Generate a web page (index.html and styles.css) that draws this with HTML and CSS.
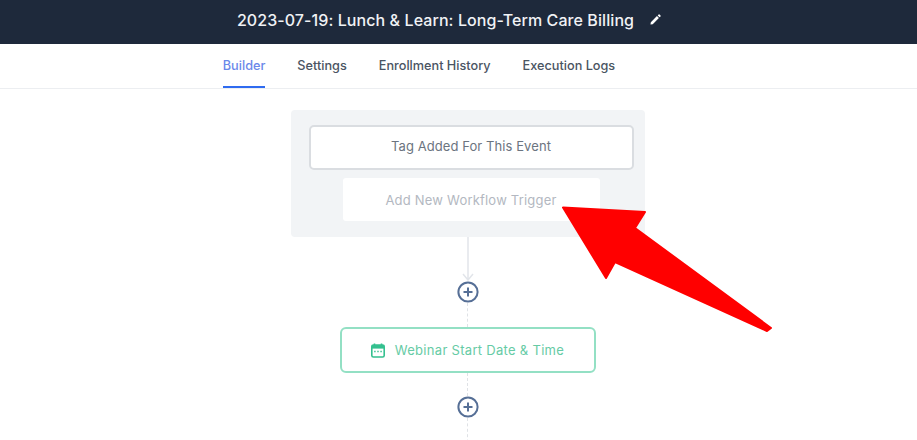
FILE: index.html
```html
<!DOCTYPE html>
<html lang="en">
<head>
<meta charset="utf-8">
<title>Workflow Builder</title>
<link rel="stylesheet" href="styles.css">
</head>
<body>
<header class="topbar">
  <h1 class="title">2023-07-19: Lunch &amp; Learn: Long-Term Care Billing</h1>
  <svg class="edit" viewBox="0 0 12 12" width="11" height="11"><path d="M0.5 11.5 L0.9 9 L7.6 2.3 L9.7 4.4 L3 11.1 Z M8.4 1.5 L9.4 0.5 Q9.9 0.1 10.4 0.5 L11.5 1.6 Q11.9 2.1 11.5 2.6 L10.5 3.6 Z" fill="#fff"/></svg>
</header>
<nav class="tabs">
  <a class="tab active">Builder</a>
  <a class="tab">Settings</a>
  <a class="tab">Enrollment History</a>
  <a class="tab">Execution Logs</a>
</nav>
<main class="canvas">
  <section class="triggers">
    <div class="trigger">Tag Added For This Event</div>
    <div class="add-trigger">Add New Workflow Trigger</div>
  </section>
  <svg class="arrow-link" viewBox="0 0 12 44" width="12" height="44"><path d="M6 0 V43 M1 37 L6 43 L11 37" fill="none" stroke="#e2e5ea" stroke-width="1.5"/></svg>
  <svg class="plus" viewBox="0 0 22 22" width="22" height="22"><circle cx="11" cy="11" r="9.6" fill="#fff" stroke="#566f96" stroke-width="2"/><path d="M11 6.5 V15.5 M6.5 11 H15.5" stroke="#566f96" stroke-width="2"/></svg>
  <div class="dash short"></div>
  <div class="step">
    <svg class="cal" viewBox="0 0 14 15" width="14" height="15"><path d="M3.5 0.5 V3 M10.5 0.5 V3" stroke="#34c08f" stroke-width="1.6"/><rect x="0.8" y="2" width="12.4" height="12" rx="1.6" fill="none" stroke="#34c08f" stroke-width="1.6"/><rect x="0.8" y="2" width="12.4" height="3.6" fill="#34c08f"/><path d="M3.2 8.5 H4.6 M6.3 8.5 H7.7 M9.4 8.5 H10.8" stroke="#34c08f" stroke-width="1.3"/></svg>
    <span>Webinar Start Date &amp; Time</span>
  </div>
  <div class="dash mid"></div>
  <svg class="plus" viewBox="0 0 22 22" width="22" height="22"><circle cx="11" cy="11" r="9.6" fill="#fff" stroke="#566f96" stroke-width="2"/><path d="M11 6.5 V15.5 M6.5 11 H15.5" stroke="#566f96" stroke-width="2"/></svg>
  <div class="dash tail"></div>
</main>
<svg class="callout" viewBox="0 0 917 440" width="917" height="440"><path d="M563 207.5 L645 212 L635 228 L771 328 L767 331 L615 262 L606 278 Z" fill="#ff0000" stroke="#ff0000" stroke-width="2" stroke-linejoin="round"/></svg>
</body>
</html>
```
FILE: styles.css
```css
* { box-sizing: border-box; }
html, body { margin: 0; height: 440px; overflow: hidden; }
body { background: #fff; font-family: Inter, "Liberation Sans", sans-serif; position: relative; }
.topbar { height: 44px; background: #1e293b; display: flex; align-items: center; justify-content: center; gap: 16px; padding: 0 19px 5px 0; }
.title { margin: 0; font-size: 16px; font-weight: 500; color: #f0f2f5; letter-spacing: 0.08px; }
.edit { display: block; }
.tabs { height: 45px; border-bottom: 1px solid #eceef1; display: flex; justify-content: center; gap: 32px; padding-right: 79px; }
.tab { height: 44px; display: flex; align-items: center; font-size: 12.7px; font-weight: 500; color: #4a5462; border-bottom: 2px solid transparent; }
.tab.active { color: #6a88ea; border-bottom-color: #2f6bf0; }
.canvas { display: flex; flex-direction: column; align-items: center; padding: 21px 0 0 18px; }
.triggers { width: 354px; height: 127px; background: #f2f4f6; border-radius: 4px; padding: 15px 11px 0 18px; display: flex; flex-direction: column; align-items: center; }
.trigger { width: 325px; height: 45px; flex: none; background: #fff; border: 2px solid #dadde1; border-radius: 5px; display: flex; align-items: center; justify-content: center; font-size: 13px; letter-spacing: 0.08px; color: #6b7480; padding-bottom: 3px; }
.add-trigger { width: 257px; height: 43px; flex: none; margin-top: 8px; background: #fff; border-radius: 3px; display: flex; align-items: center; justify-content: center; font-size: 13px; letter-spacing: 0.2px; color: #b3b8c1; }
.arrow-link { display: block; flex: none; }
.plus { display: block; flex: none; }
.dash { width: 0; flex: none; border-left: 1.5px dashed #dfe2e6; }
.dash.short { height: 24px; }
.dash.mid { height: 23px; }
.dash.tail { height: 30px; }
.step { width: 256px; height: 46px; flex: none; border: 2px solid #93e0c4; border-radius: 6px; background: #fff; display: flex; align-items: center; justify-content: center; gap: 10px; font-size: 13px; letter-spacing: 0.3px; color: #66cba5; }
.cal { display: block; }
.callout { position: absolute; left: 0; top: 0; pointer-events: none; }
```
